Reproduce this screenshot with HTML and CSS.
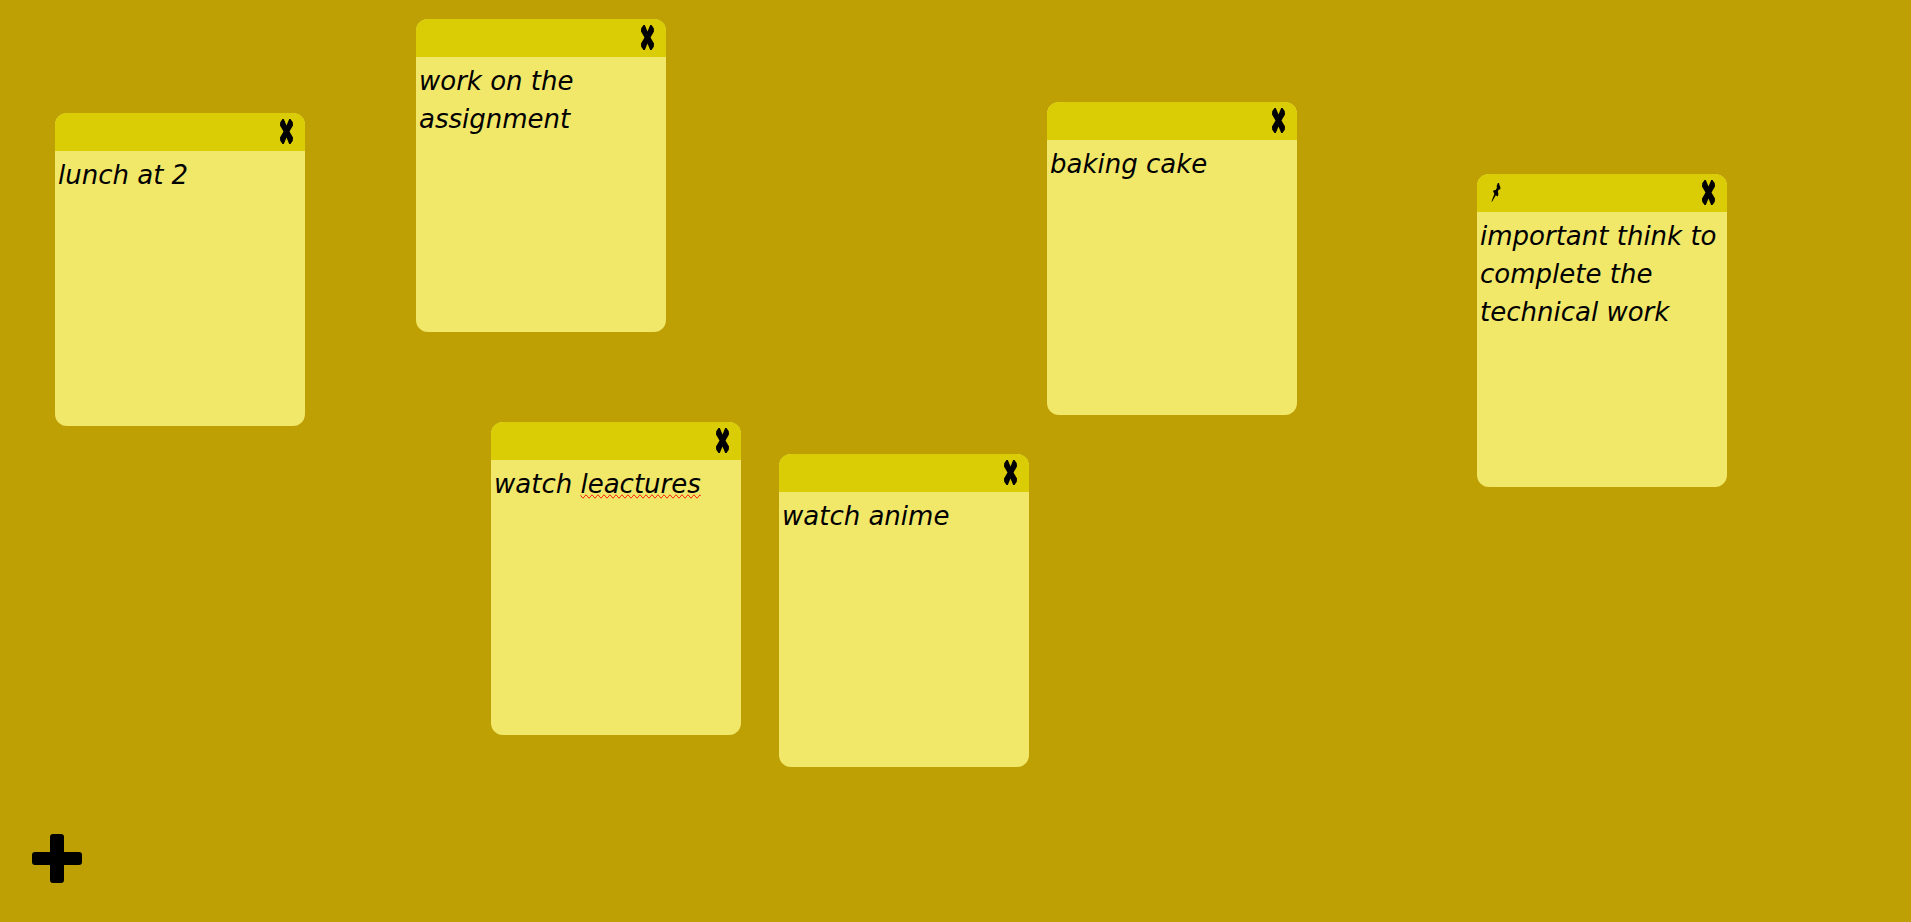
FILE: index.html
```html
<!DOCTYPE html>
<html lang="en">
<head>
<meta charset="utf-8">
<meta name="viewport" content="width=device-width, initial-scale=1">
<title>Sticky notes</title>
<link rel="stylesheet" href="styles.css">
</head>
<body>
<svg class="symbols" aria-hidden="true">
  <symbol id="cross" viewBox="0 0 13 25" preserveAspectRatio="none">
    <path d="M2.500 0 3.800 0 6.500 6.400 9.200 0 10.500 0 12.800 3.200 13 6.500 9.500 12.500 13 18.500 12.800 21.800 10.500 25 9.200 25 6.500 18.600 3.800 25 2.500 25 .2 21.800 0 18.500 3.500 12.500 0 6.500.2 3.200Z"/>
  </symbol>
  <symbol id="pin" viewBox="0 0 9 19">
    <path d="M6.300 0 7.600 0 7.800 1.400 9 4.800 8.600 6.400 7.400 6.400 6.400 8.300 6.900 11.500 6.200 13.400 4.300 12.300.5 18.800 0 18.500 2.900 10.700 1.600 8.600 2.200 7.200 4.200 7 5.500 4.600 5.100 3.200Z"/>
  </symbol>
</svg>
<main class="board">
  <article class="note" style="left:55px;top:113px">
    <header class="note-bar"><button class="note-close" aria-label="Delete note"><svg><use href="#cross"/></svg></button></header>
    <textarea class="note-text" aria-label="Note" spellcheck="false">lunch at 2</textarea>
  </article>
  <article class="note" style="left:416px;top:19px">
    <header class="note-bar"><button class="note-close" aria-label="Delete note"><svg><use href="#cross"/></svg></button></header>
    <textarea class="note-text" aria-label="Note" spellcheck="false">work on the assignment</textarea>
  </article>
  <article class="note" style="left:491px;top:422px">
    <header class="note-bar"><button class="note-close" aria-label="Delete note"><svg><use href="#cross"/></svg></button></header>
    <div class="note-text" role="textbox" aria-multiline="true" aria-label="Note" contenteditable="true" spellcheck="false">watch <span class="misspelled">leactures</span></div>
  </article>
  <article class="note" style="left:779px;top:454px">
    <header class="note-bar"><button class="note-close" aria-label="Delete note"><svg><use href="#cross"/></svg></button></header>
    <textarea class="note-text" aria-label="Note" spellcheck="false">watch anime</textarea>
  </article>
  <article class="note" style="left:1047px;top:102px">
    <header class="note-bar"><button class="note-close" aria-label="Delete note"><svg><use href="#cross"/></svg></button></header>
    <textarea class="note-text" aria-label="Note" spellcheck="false">baking cake</textarea>
  </article>
  <article class="note" style="left:1477px;top:174px">
    <header class="note-bar"><button class="note-pin" aria-label="Unpin note"><svg><use href="#pin"/></svg></button><button class="note-close" aria-label="Delete note"><svg><use href="#cross"/></svg></button></header>
    <textarea class="note-text" aria-label="Note" spellcheck="false">important think to complete the technical work</textarea>
  </article>
</main>
<button class="add-note" aria-label="Add note">
  <svg viewBox="0 0 50 49"><rect x="18" width="14" height="49" rx="3"/><rect y="18" width="50" height="13" rx="3"/></svg>
</button>
</body>
</html>
```
FILE: styles.css
```css
* {
  box-sizing: border-box;
}

body {
  margin: 0;
  background: #bea004;
}

.symbols {
  position: absolute;
  width: 0;
  height: 0;
}

.board {
  position: relative;
  min-height: 100vh;
}

button {
  padding: 0;
  border: 0;
  background: none;
  color: #000;
  cursor: pointer;
}

svg {
  display: block;
  fill: currentColor;
}

.note {
  position: absolute;
  display: flex;
  flex-direction: column;
  width: 250px;
  height: 313px;
  border-radius: 12px;
  overflow: hidden;
  background: #f1e86a;
}

.note-bar {
  display: flex;
  align-items: center;
  height: 38px;
  padding: 0 12px 2px 14px;
  background: #dacd05;
}

.note-close {
  margin-left: auto;
}

.note-close svg {
  width: 13px;
  height: 25px;
}

.note-pin svg {
  width: 10px;
  height: 19px;
}

.note-text {
  flex: 1;
  width: 100%;
  margin: 0;
  padding: 5px 3px;
  border: 0;
  outline: 0;
  resize: none;
  overflow: hidden;
  background: none;
  color: #000;
  font: italic 26px/38px "DejaVu Sans", sans-serif;
}

.misspelled {
  text-decoration-line: spelling-error;
}

.add-note {
  position: fixed;
  left: 32px;
  bottom: 39px;
}

.add-note svg {
  width: 50px;
  height: 49px;
}
```
